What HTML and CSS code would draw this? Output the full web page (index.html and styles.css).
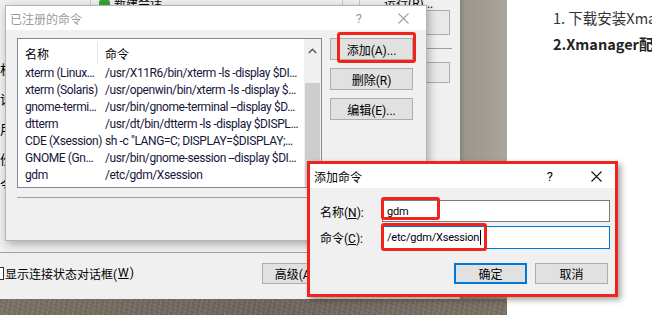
FILE: index.html
```html
<!DOCTYPE html>
<html lang="zh-CN">
<head>
    <meta charset="UTF-8">
    <title>已注册的命令</title>
    <link rel="stylesheet" href="styles.css">
</head>
<body>
<div class="desk">
    <!-- 后面的 Xstart 主窗口 -->
    <div class="host">
        <div class="host-top">
            <span class="frag">…</span>
            <span class="tab"><i class="go"></i>新建会话</span>
            <span class="tsep"></span>
            <span class="tsep tsep2"></span>
            <span class="run">运行(R)...</span>
        </div>
        <div class="host-mid">
            <div class="host-labels">
                <span>机</span>
                <span>设</span>
                <span>用</span>
                <span>份</span>
                <span class="last">令</span>
            </div>
            <div class="host-side">
                <div class="side-box"></div>
                <div class="side-line"></div>
                <div class="side-box side-box2"></div>
            </div>
        </div>
        <div class="host-rule"></div>
        <div class="host-bottom">
            <label class="check"><i class="box"></i>显示连接状态对话框(<u>W</u>)</label>
            <span class="btn btn-adv">高级(A)...</span>
        </div>
    </div>

    <div class="shade"></div>

    <!-- 右边网页 -->
    <div class="page">
        <p class="step">1. 下载安装Xmanager</p>
        <p class="step step-b">2.Xmanager配置</p>
    </div>

    <!-- 已注册的命令 -->
    <div class="dlg dlg-main">
        <div class="dlg-title inactive">
            <span class="dlg-name">已注册的命令</span>
            <span class="q">?</span>
            <svg class="close" width="11" height="11" viewBox="0 0 11 11"><path d="M0.5 0.5L10.5 10.5M10.5 0.5L0.5 10.5" stroke="#a0a0a0" stroke-width="1.1" fill="none"/></svg>
        </div>
        <div class="dlg-body">
            <div class="cmd-area">
                <div class="list">
                    <div class="list-main">
                        <div class="row head">
                            <span class="c1">名称</span>
                            <span class="c2">命令</span>
                        </div>
                        <div class="row"><span class="c1">xterm (Linux…</span><span class="c2">/usr/X11R6/bin/xterm -ls -display $DI…</span></div>
                        <div class="row"><span class="c1">xterm (Solaris)</span><span class="c2">/usr/openwin/bin/xterm -ls -display $…</span></div>
                        <div class="row"><span class="c1">gnome-termi…</span><span class="c2">/usr/bin/gnome-terminal --display $D…</span></div>
                        <div class="row"><span class="c1">dtterm</span><span class="c2">/usr/dt/bin/dtterm -ls -display $DISPL…</span></div>
                        <div class="row"><span class="c1">CDE (Xsession)</span><span class="c2">sh -c "LANG=C; DISPLAY=$DISPLAY;…</span></div>
                        <div class="row"><span class="c1">GNOME (Gn…</span><span class="c2">/usr/bin/gnome-session --display $DI…</span></div>
                        <div class="row"><span class="c1">gdm</span><span class="c2">/etc/gdm/Xsession</span></div>
                    </div>
                    <div class="scroll">
                        <svg class="up" width="9" height="6" viewBox="0 0 9 6"><path d="M0.8 5L4.5 1.3L8.2 5" stroke="#606060" stroke-width="1.6" fill="none"/></svg>
                        <div class="thumb"></div>
                    </div>
                </div>
                <div class="btns">
                    <span class="btn btn-side">添加(A)...<i class="mark mark-add"></i></span>
                    <span class="btn btn-side">删除(R)</span>
                    <span class="btn btn-side">编辑(E)...</span>
                </div>
            </div>
            <div class="rule"></div>
        </div>
    </div>

    <!-- 添加命令 -->
    <div class="dlg dlg-add">
        <div class="dlg-title">
            <span class="dlg-name">添加命令</span>
            <span class="q">?</span>
            <svg class="close" width="11" height="11" viewBox="0 0 11 11"><path d="M0.5 0.5L10.5 10.5M10.5 0.5L0.5 10.5" stroke="#111" stroke-width="1.1" fill="none"/></svg>
        </div>
        <div class="add-body">
            <div class="field">
                <span class="lbl">名称(<u>N</u>):</span>
                <span class="input">gdm<i class="mark mark-name"></i></span>
            </div>
            <div class="field">
                <span class="lbl">命令(<u>C</u>):</span>
                <span class="input focus">/etc/gdm/Xsession<b class="caret"></b><i class="mark mark-cmd"></i></span>
            </div>
            <div class="add-btns">
                <span class="btn btn-ok">确定</span>
                <span class="btn btn-cancel">取消</span>
            </div>
        </div>
    </div>
</div>
</body>
</html>
```

FILE: styles.css
```css
* {
    margin: 0;
    padding: 0;
    box-sizing: border-box;
}

body {
    font-family: Roboto, "Noto Sans CJK SC", sans-serif;
    font-size: 12px;
    color: #000;
}

u {
    text-decoration: underline;
    text-underline-offset: 1px;
}

.desk {
    position: relative;
    width: 652px;
    height: 315px;
    overflow: hidden;
    background: #6f675d;
    background-image:
        repeating-linear-gradient(100deg, rgba(255, 255, 255, .06) 0 2px, transparent 2px 5px),
        repeating-linear-gradient(20deg, rgba(0, 0, 0, .08) 0 1px, transparent 1px 4px),
        linear-gradient(to right, #7a7064, #6d655b 40%, #81776b);
}

/* 主窗口 */
.host {
    position: absolute;
    left: 0;
    top: 0;
    width: 460px;
    height: 299px;
    background: #f0f0f0;
    display: flex;
    flex-direction: column;
}

.host-top {
    height: 10px;
    display: flex;
    align-items: flex-end;
    overflow: hidden;
    line-height: 16px;
}

.host-top > span {
    margin-bottom: -2px;
}

.frag {
    margin-left: 6px;
    color: #333;
}

.tab {
    display: flex;
    align-items: center;
    gap: 4px;
    margin-left: 76px;
    padding-left: 8px;
    border-left: 1px solid #c8c8c8;
}

.go {
    width: 11px;
    height: 9px;
    background: #3aa335;
    border-radius: 2px;
}

.tsep {
    width: 1px;
    height: 14px;
    background: #c8c8c8;
    margin-left: 180px;
}

.tsep2 {
    margin-left: 16px;
}

.run {
    margin-left: 24px;
}

.host-mid {
    height: 242px;
    display: flex;
    justify-content: space-between;
}

.host-labels {
    display: flex;
    flex-direction: column;
    gap: 14px;
    padding-top: 52px;
    line-height: 16px;
    font-size: 13px;
}

.host-labels .last {
    margin-top: -5px;
}

.host-side {
    width: 60px;
    margin-right: 10px;
}

.side-box {
    height: 25px;
    border: 1px solid #adadad;
    background: #e8e8e8;
}

.side-line {
    height: 1px;
    margin: 13px -2px 13px 0;
    background: #a0a0a0;
}

.side-box2 {
    height: 21px;
}

.host-rule {
    height: 1px;
    margin-right: 6px;
    background: #a0a0a0;
}

.host-bottom {
    display: flex;
    align-items: center;
    height: 42px;
    padding-bottom: 2px;
}

.check {
    display: flex;
    align-items: center;
    gap: 1px;
    font-size: 12px;
}

.check .box {
    width: 13px;
    height: 13px;
    margin-left: -9px;
    border: 1px solid #333;
    background: #fff;
}

.btn {
    position: relative;
    display: flex;
    align-items: center;
    justify-content: center;
    background: #e1e1e1;
    border: 1px solid #adadad;
}

.btn-adv {
    width: 75px;
    height: 21px;
    margin-left: 128px;
}

.shade {
    position: absolute;
    left: 460px;
    top: 0;
    width: 47px;
    height: 299px;
    background: linear-gradient(to right, #87837c, #9b978f 5px, #a29e96 60%, #aaa69f);
}

/* 网页 */
.page {
    position: absolute;
    left: 507px;
    top: 0;
    width: 145px;
    height: 315px;
    background: #fff;
    padding: 8px 0 0 46px;
    font-family: "Noto Sans CJK SC", sans-serif;
    font-size: 14.5px;
    color: #333;
    white-space: nowrap;
}

.step {
    line-height: 20px;
}

.step-b {
    margin-top: 6px;
    font-weight: bold;
    color: #222;
}

/* 对话框 */
.dlg {
    position: absolute;
    background: #f0f0f0;
    display: flex;
    flex-direction: column;
    box-shadow: 2px 3px 9px rgba(0, 0, 0, .3);
}

.dlg-title {
    display: flex;
    align-items: center;
    background: #fff;
    height: 24px;
    padding-left: 4px;
}

.dlg-title .dlg-name {
    flex: 1;
}

.inactive {
    color: #9a9a9a;
}

.dlg-main {
    left: 5px;
    top: 5px;
    width: 422px;
    height: 236px;
    border: 1px solid #b4b4b4;
}

.dlg-main .dlg-title .q {
    margin-right: 36px;
    font-size: 13px;
}

.dlg-main .close {
    margin-right: 17px;
}

.dlg-body {
    padding: 8px 0 0 11px;
}

.cmd-area {
    display: flex;
    gap: 8px;
}

.list {
    display: flex;
    width: 305px;
    height: 150px;
    border: 1px solid #828790;
    background: #fff;
}

.list-main {
    flex: 1;
    overflow: hidden;
}

.row {
    display: flex;
    height: 17px;
    line-height: 17px;
    white-space: nowrap;
    letter-spacing: -0.4px;
    color: #16163a;
}

.row.head {
    height: 26px;
    letter-spacing: 0;
    color: #000;
}

.c1 {
    flex-shrink: 0;
    width: 80px;
    padding-left: 7px;
}

.head .c1 {
    border-right: 1px solid #e5e5e5;
    height: 22px;
    margin-top: 3px;
    line-height: 26px;
}

.head .c2 {
    line-height: 32px;
}

.c2 {
    flex-shrink: 0;
    padding-left: 7px;
}

.scroll {
    width: 17px;
    flex-shrink: 0;
    display: flex;
    flex-direction: column;
    align-items: center;
    background: #f0f0f0;
}

.up {
    margin-top: 9px;
}

.thumb {
    width: 15px;
    flex: 1;
    margin-top: 29px;
    background: #cdcdcd;
}

.btns {
    display: flex;
    flex-direction: column;
    gap: 8px;
}

.btn-side {
    width: 83px;
    height: 22px;
}

.rule {
    height: 1px;
    width: 398px;
    margin-top: 9px;
    background: #a0a0a0;
}

/* 红色标注框 */
.mark {
    position: absolute;
    border: 3px solid #f0241c;
    border-radius: 3px;
}

.mark-add {
    left: 6px;
    top: -7px;
    width: 79px;
    height: 31px;
}

.dlg-add {
    left: 307px;
    top: 161px;
    width: 311px;
    height: 136px;
    border: 3px solid #f0241c;
    box-shadow: 3px 3px 6px rgba(0, 0, 0, .35);
}

.dlg-add .q {
    margin-right: 38px;
    font-size: 13px;
}

.dlg-add .close {
    margin-right: 13px;
}

.add-body {
    display: flex;
    flex-direction: column;
    gap: 4px;
    padding: 12px 5px 0 10px;
}

.field {
    display: flex;
    align-items: center;
}

.lbl {
    width: 62px;
}

.input {
    position: relative;
    display: flex;
    align-items: center;
    width: 228px;
    height: 22px;
    padding-left: 4px;
    background: #fff;
    border: 1px solid #7a7a7a;
    font-size: 11px;
    letter-spacing: -0.2px;
}

.input.focus {
    height: 23px;
    border-color: #0078d7;
}

.caret {
    width: 1px;
    height: 15px;
    margin-left: 1px;
    background: #000;
}

.mark-name {
    left: -2px;
    top: -4px;
    width: 59px;
    height: 23px;
}

.mark-cmd {
    left: -2px;
    top: -4px;
    width: 106px;
    height: 28px;
}

.add-btns {
    display: flex;
    justify-content: flex-end;
    gap: 8px;
    margin-top: 10px;
    padding-right: 2px;
}

.btn-ok,
.btn-cancel {
    width: 73px;
    height: 21px;
}

.btn-ok {
    border: 2px solid #0078d7;
}
```
